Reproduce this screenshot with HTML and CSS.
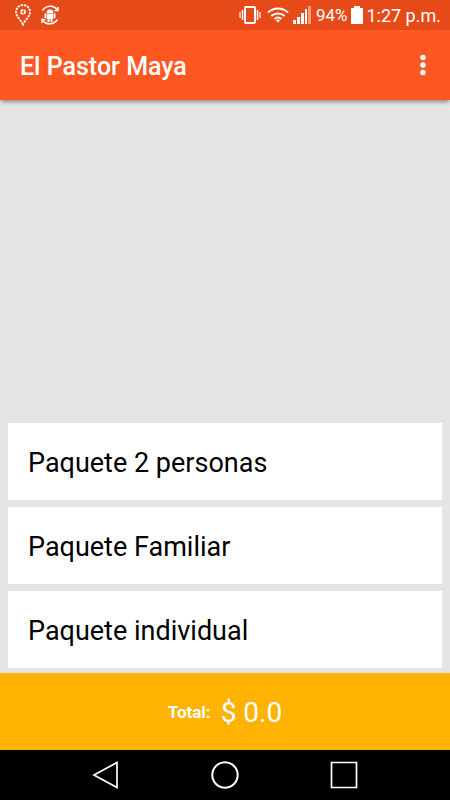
FILE: index.html
```html
<!DOCTYPE html>
<html lang="es">
  <head>
    <meta charset="UTF-8" />
    <meta name="viewport" content="width=device-width, initial-scale=1.0" />
    <title>El Pastor Maya</title>
    <link rel="stylesheet" href="styles.css">
  </head>
  <body>
    <div class="status-bar">
      <div class="notifications">
        <svg width="16" height="22" viewBox="0 0 16 22" fill="none" stroke="#fff">
          <path d="M8 20.500C6 16 1 12.500 1 8a7 7 0 0 1 14 0c0 4.500-5 8-7 12.500z" stroke-width="1.800" stroke-dasharray="2.400 0.900" />
          <circle cx="8" cy="8" r="2" stroke-width="1.800" stroke-dasharray="2.400 0.700" />
        </svg>
        <svg width="18" height="20" viewBox="0 0 18 20" fill="none" stroke="#fff">
          <path d="M1.500 5.500C5 0 13 0 16 4.500M17 2v3.500h-3.500M16.500 14.500c-3.500 5.500-11.500 5.500-14.500 1M1 18v-3.500h3.500" stroke-width="1.600" />
          <path d="M5.500 8a3.500 3.500 0 0 1 7 0zM5.500 8.500h7V14h-7zM6.500 13.500h2V17h-2zM9.500 13.500h2V17h-2zM3.500 8.500H5V13H3.500zM13 8.500h1.500V13H13z" fill="#fff" stroke="none" />
        </svg>
      </div>
      <div class="indicators">
        <svg width="22" height="20" viewBox="0 0 22 20" fill="none" stroke="#fff">
          <rect x="6" y="2" width="10" height="16" rx="1" stroke-width="2" />
          <path d="M3.500 5v10M18.500 5v10" stroke-width="1.500" />
          <path d="M1 7v6M21 7v6" stroke-width="1.200" />
        </svg>
        <svg class="wifi" width="22" height="16" viewBox="0 0 22 16" fill="none" stroke="#fff" stroke-width="2">
          <path d="M1 5.500c6-5.300 14-5.300 20 0M4.300 9c4-3.500 9.400-3.500 13.400 0M7.500 12c2.200-1.800 4.800-1.800 7 0" />
          <path d="M8.800 13.200L11 15.500l2.200-2.300q-2.200-1.400-4.400 0z" fill="#fff" stroke="none" />
        </svg>
        <svg class="signal" width="18" height="18" viewBox="0 0 18 18" fill="#fff">
          <path d="M0 14h3v4H0zM4 11h3v7H4zM8 7h3v11H8zM12 3h2v15h-2z" />
          <path d="M15 0h3v18h-3z" opacity="0.450" />
        </svg>
        <span class="percent">94%</span>
        <svg class="battery" width="12" height="18" viewBox="0 0 12 18" fill="#fff">
          <path d="M0 2h3V0h6v2h3v16H0z" />
        </svg>
        <span class="clock">1:27 p.m.</span>
      </div>
    </div>

    <header>
      <h1>El Pastor Maya</h1>
      <button class="menu" aria-label="Más opciones">
        <svg width="6" height="22" viewBox="0 0 6 22" fill="#fff">
          <circle cx="3" cy="3.500" r="2.700" />
          <circle cx="3" cy="11" r="2.700" />
          <circle cx="3" cy="18.500" r="2.700" />
        </svg>
      </button>
    </header>

    <main>
      <ul class="packages">
        <li><button class="package">Paquete 2 personas</button></li>
        <li><button class="package">Paquete Familiar</button></li>
        <li><button class="package">Paquete individual</button></li>
      </ul>
    </main>

    <footer class="total">
      <span class="total-label">Total:</span>
      <span class="total-amount">$ 0.0</span>
    </footer>

    <nav>
      <button aria-label="Atrás">
        <svg width="28" height="28" viewBox="0 0 28 28" fill="none" stroke="#fff" stroke-width="1.700">
          <path d="M25 1.500v25L2 14z" />
        </svg>
      </button>
      <button aria-label="Inicio">
        <svg width="28" height="28" viewBox="0 0 28 28" fill="none" stroke="#fff" stroke-width="2">
          <circle cx="14" cy="14" r="12.700" />
        </svg>
      </button>
      <button aria-label="Recientes">
        <svg width="28" height="28" viewBox="0 0 28 28" fill="none" stroke="#fff" stroke-width="1.700">
          <path d="M1.500 1.500h25v25h-25z" />
        </svg>
      </button>
    </nav>
  </body>
</html>
```
FILE: styles.css
```css
* {
  box-sizing: border-box;
}

body {
  margin: 0;
  min-height: 100vh;
  display: flex;
  flex-direction: column;
  font-family: Roboto, sans-serif;
  background-color: #e5e5e5;
  color: #000;
}

button {
  border: none;
  padding: 0;
  background: none;
  color: inherit;
  font: inherit;
  cursor: pointer;
}

svg {
  display: block;
}

.status-bar {
  display: flex;
  justify-content: space-between;
  align-items: center;
  height: 30px;
  padding: 0 9px 0 15px;
  background-color: #e64a19;
  color: #fff;
}

.notifications,
.indicators {
  display: flex;
  align-items: center;
}

.notifications {
  gap: 10px;
}

.wifi {
  margin-left: 6px;
}

.signal {
  margin-left: 4px;
}

.percent {
  margin-left: 5px;
  font-size: 17px;
}

.battery {
  margin: 0 3px 0 4px;
}

.clock {
  font-size: 18px;
}

header {
  display: flex;
  justify-content: space-between;
  align-items: center;
  height: 70px;
  padding: 0 16px 0 20px;
  background-color: #ff5722;
  color: #fff;
  box-shadow: 0 3px 4px -1px rgba(0, 0, 0, 0.4);
}

h1 {
  margin: 0;
  padding-top: 2px;
  font-size: 25px;
  font-weight: 500;
}

.menu {
  padding: 8px;
}

main {
  flex: 1;
  display: flex;
  flex-direction: column;
  justify-content: flex-end;
  padding: 8px 8px 5px;
}

.packages {
  display: flex;
  flex-direction: column;
  gap: 7px;
  margin: 0;
  padding: 0;
  list-style: none;
}

.package {
  display: block;
  width: 100%;
  padding: 22px 20px 18px;
  background-color: #fff;
  font-size: 27px;
  line-height: 37px;
  text-align: left;
}

.total {
  display: flex;
  justify-content: center;
  align-items: center;
  gap: 10px;
  height: 77px;
  background-color: #ffb300;
  color: #fff;
}

.total-label {
  font-size: 17px;
  font-weight: 700;
}

.total-amount {
  padding-top: 2px;
  font-size: 28px;
}

nav {
  display: flex;
  justify-content: center;
  align-items: center;
  gap: 91px;
  height: 50px;
  background-color: #000;
}
```
